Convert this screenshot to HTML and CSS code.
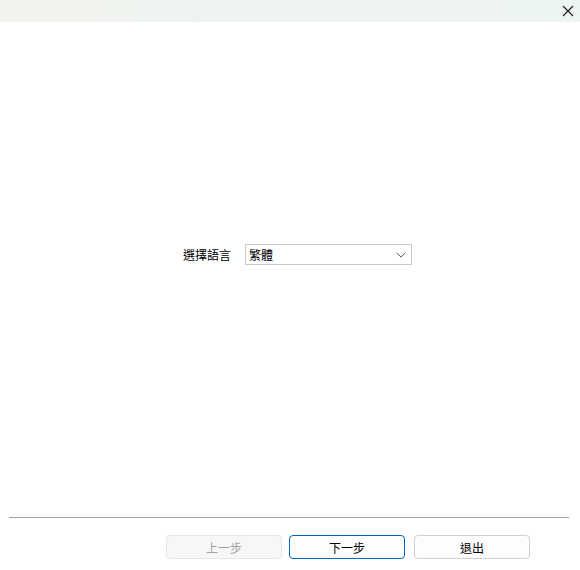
FILE: index.html
```html
<!DOCTYPE html>
<html lang="zh-Hant">
<head>
<meta charset="utf-8">
<title>選擇語言</title>
<link rel="stylesheet" href="styles.css">
</head>
<body>
<div class="window">
  <div class="titlebar">
    <button class="close" aria-label="關閉">
      <svg width="12" height="12" viewBox="0 0 12 12"><path d="M1 1 L11 11 M11 1 L1 11" stroke="#1a1a1a" stroke-width="1.1" fill="none"/></svg>
    </button>
  </div>
  <div class="main">
    <div class="row">
      <span class="label">選擇語言</span>
      <div class="select">
        <span class="value">繁體</span>
        <svg class="chev" width="10" height="6" viewBox="0 0 10 6"><path d="M0.5 0.8 L5 5 L9.5 0.8" stroke="#5a5a5a" stroke-width="1" fill="none"/></svg>
      </div>
    </div>
  </div>
  <div class="sep"></div>
  <div class="footer">
    <button class="btn disabled">上一步</button>
    <button class="btn primary">下一步</button>
    <button class="btn">退出</button>
  </div>
</div>
</body>
</html>
```
FILE: styles.css
```css
html, body {
  margin: 0;
  padding: 0;
  background: #ffffff;
}
body {
  font-family: "Noto Sans CJK TC", "Noto Sans", sans-serif;
  font-size: 12px;
  color: #000;
}
.window {
  width: 580px;
  height: 570px;
  display: flex;
  flex-direction: column;
}
.titlebar {
  height: 22px;
  background: linear-gradient(90deg, #f1f3ee 0%, #eff4f1 50%, #edf5f3 100%);
  display: flex;
  justify-content: flex-end;
  align-items: center;
}
.close {
  border: 0;
  background: transparent;
  padding: 0;
  margin-right: 6px;
  width: 12px;
  height: 12px;
  display: flex;
  margin-top: -1px;
}
.main {
  height: 495px;
  display: flex;
  flex-direction: column;
}
.row {
  margin-top: 222px;
  display: flex;
  align-items: flex-start;
  justify-content: center;
  padding-left: 15px;
  gap: 14px;
}
.label {
  line-height: 20px;
  margin-top: 1px;
}
.select {
  height: 19px;
  border: 1px solid #c9c9c9;
  display: flex;
  align-items: center;
  justify-content: space-between;
  padding: 0 5px 0 3px;
  box-sizing: content-box;
  width: 157px;
}
.value {
  line-height: 19px;
}
.chev {
  margin-top: 1px;
}
.sep {
  height: 1px;
  margin: 0 11px 0 9px;
  background: #a0a0a0;
}
.footer {
  display: flex;
  padding-top: 17px;
  padding-left: 166px;
}
.btn {
  width: 116px;
  height: 24px;
  border: 1px solid #d0d0d0;
  border-radius: 4px;
  background: #fdfdfd;
  font-family: "Noto Sans CJK TC", "Noto Sans", sans-serif;
  font-size: 12px;
  color: #000;
  padding: 0;
  box-sizing: border-box;
}
.btn.disabled {
  background: #f7f7f7;
  border-color: #e6e6e6;
  color: #a0a0a0;
}
.btn.primary {
  border: 1.5px solid #0067c0;
  background: #fdfdfd;
  margin-left: 7px;
}
.btn.primary + .btn {
  margin-left: 9px;
}
```
